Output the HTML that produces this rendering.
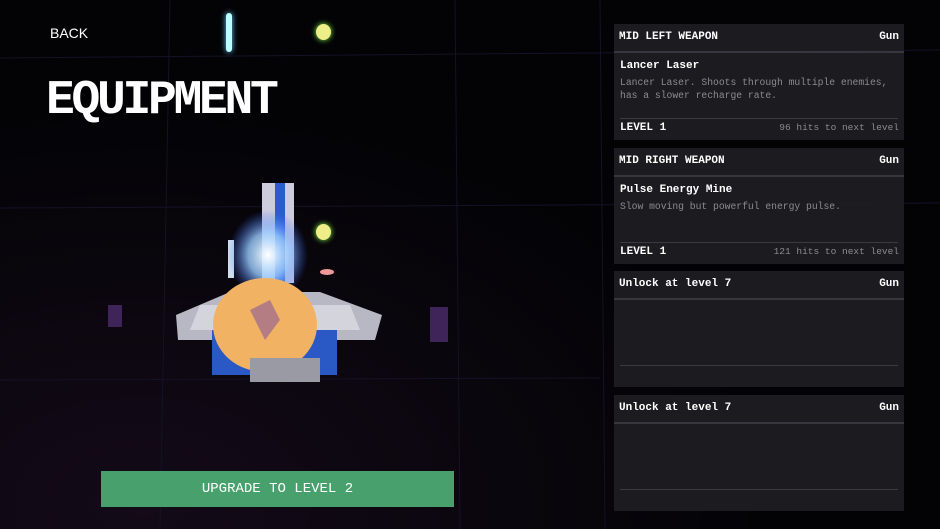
<!DOCTYPE html><html><head><style>
body{margin:0;width:940px;height:529px;overflow:hidden;background:#030306;font-family:"Liberation Mono",monospace;color:#fff;position:relative}
.bg{position:absolute;inset:0;background:radial-gradient(ellipse at 15% 95%,#140a18 0%,transparent 55%)}
.a{position:absolute}
.p{position:absolute;left:614px;width:290px;height:116px;background:rgba(30,30,35,.92)}
.h{position:absolute;left:5px;right:5px;top:7px;font-size:11px;font-weight:bold;display:flex;justify-content:space-between}
.hl{position:absolute;left:0;right:0;top:27px;height:2px;background:#36363e}
.t{position:absolute;left:6px;top:36px;font-size:11px;font-weight:bold}
.d{position:absolute;left:6px;top:52px;font-size:9.7px;color:#8a8a90;line-height:13px;width:285px}
.fl{position:absolute;left:6px;right:6px;top:94px;height:1px;background:#3a3a42}
.f{position:absolute;left:6px;right:5px;top:98px;font-size:11px;font-weight:bold;display:flex;justify-content:space-between}
.f span:last-child{font-weight:normal;color:#8a8a90;font-size:9.5px}
</style></head><body><div class="bg"></div>
<svg class="a" style="left:0;top:0" width="940" height="529"><g stroke="#141226" stroke-width="1" fill="none"><path d="M0 58 L940 50"/><path d="M0 208 L940 203"/><path d="M0 380 L600 378"/><path d="M170 0 L160 529"/><path d="M455 0 L460 529"/><path d="M600 0 L605 529"/></g></svg>
<div class="a" style="left:50px;top:25px;font-family:'Liberation Sans',sans-serif;font-size:14px">BACK</div>
<div class="a" style="left:46px;top:74px;font-size:48px;font-weight:bold;letter-spacing:-3.3px">EQUIPMENT</div>
<div class="a" style="left:226px;top:13px;width:6px;height:39px;background:#bff;border-radius:3px;box-shadow:0 0 6px #6cf"></div>
<div class="a" style="left:316px;top:24px;width:15px;height:16px;background:#ee8;border-radius:50%;box-shadow:0 0 6px #8f4"></div>
<div class="a" style="left:316px;top:224px;width:15px;height:16px;background:#ee8;border-radius:50%;box-shadow:0 0 6px #8f4"></div>
<svg class="a" style="left:170px;top:180px" width="220" height="205">
<defs><radialGradient id="g"><stop offset="0" stop-color="#fff"/><stop offset=".5" stop-color="#9cf" stop-opacity=".8"/><stop offset="1" stop-color="#36f" stop-opacity="0"/></radialGradient></defs>
<polygon points="6,135 60,112 150,112 212,135 205,160 8,160" fill="#b8b8c4"/>
<polygon points="30,125 180,125 190,150 20,150" fill="#d4d4dc"/>
<rect x="42" y="150" width="125" height="45" fill="#2a58c4"/>
<rect x="92" y="3" width="32" height="100" fill="#ccd"/><rect x="105" y="3" width="10" height="100" fill="#2a5ccc"/>
<rect x="58" y="60" width="6" height="38" fill="#cde"/>
<ellipse cx="98" cy="75" rx="40" ry="45" fill="url(#g)"/>
<ellipse cx="95" cy="145" rx="52" ry="47" fill="#f2b264"/>
<path d="M80 130 L100 120 L110 140 L95 160 Z" fill="#8a5a9a" opacity=".6"/>
<rect x="80" y="178" width="70" height="24" fill="#9a9aa4"/>
<ellipse cx="157" cy="92" rx="7" ry="3" fill="#e99"/>
</svg>
<div class="a" style="left:108px;top:305px;width:14px;height:22px;background:#3e2458"></div>
<div class="a" style="left:430px;top:307px;width:18px;height:35px;background:#3e2458"></div>
<div class="a" style="left:101px;top:471px;width:353px;height:36px;background:#48a06c;font-size:14px;text-align:center;line-height:37px">UPGRADE TO LEVEL 2</div>

<div class="p" style="top:24px"><div class="h"><span>MID LEFT WEAPON</span><span>Gun</span></div><div class="hl"></div><div class="t">Lancer Laser</div><div class="d">Lancer Laser. Shoots through multiple enemies, has a slower recharge rate.</div><div class="fl"></div><div class="f"><span>LEVEL 1</span><span>96 hits to next level</span></div></div>
<div class="p" style="top:148px"><div class="h"><span>MID RIGHT WEAPON</span><span>Gun</span></div><div class="hl"></div><div class="t">Pulse Energy Mine</div><div class="d">Slow moving but powerful energy pulse.</div><div class="fl"></div><div class="f"><span>LEVEL 1</span><span>121 hits to next level</span></div></div>
<div class="p" style="top:271px"><div class="h"><span>Unlock at level 7</span><span>Gun</span></div><div class="hl"></div><div class="fl"></div></div>
<div class="p" style="top:395px"><div class="h"><span>Unlock at level 7</span><span>Gun</span></div><div class="hl"></div><div class="fl"></div></div>
</body></html>
